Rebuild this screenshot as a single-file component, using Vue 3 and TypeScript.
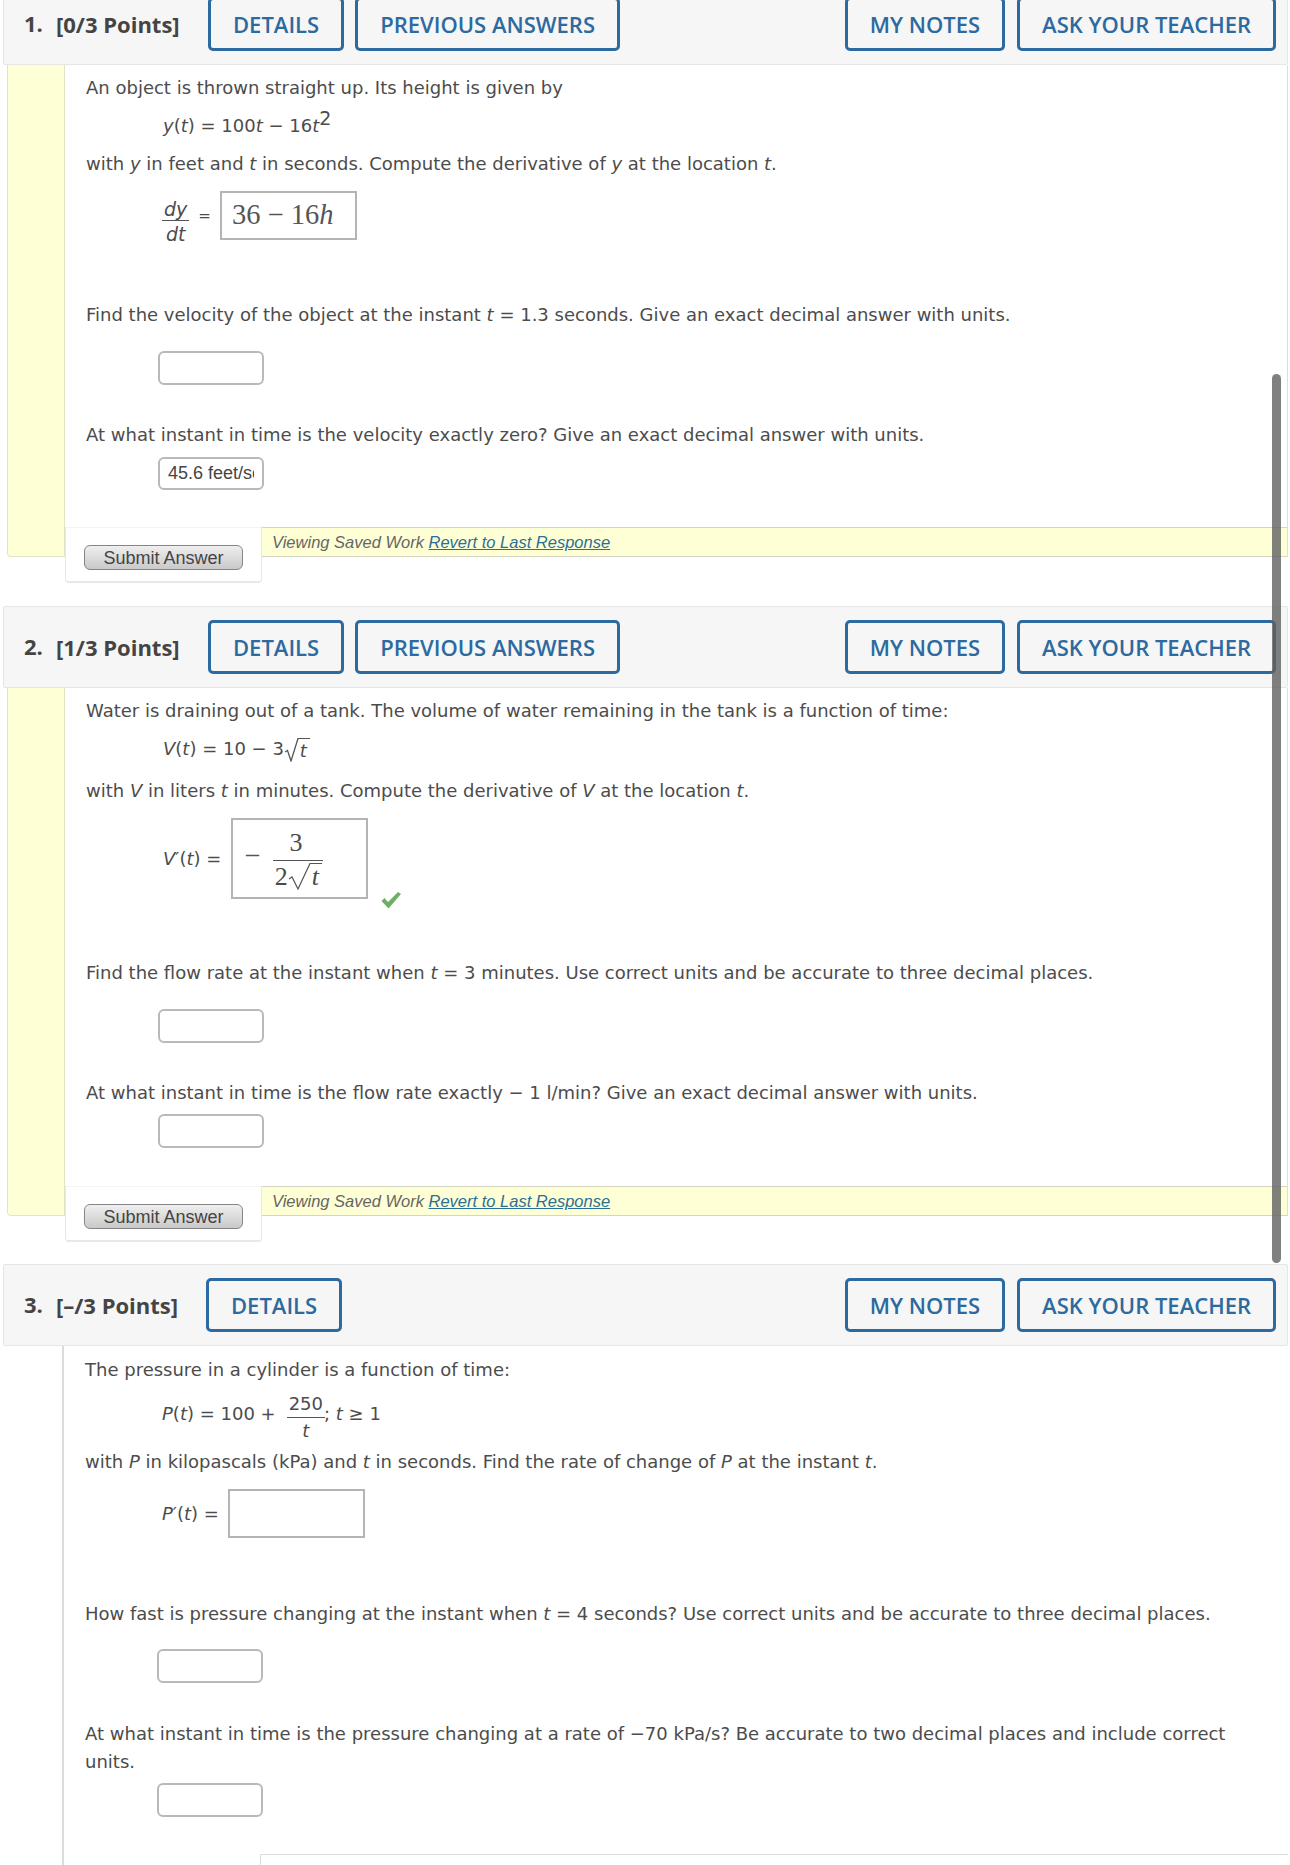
<script setup lang="ts">
const leftButtons = ['DETAILS', 'PREVIOUS ANSWERS']
const rightButtons = ['MY NOTES', 'ASK YOUR TEACHER']
</script>

<template>
  <div class="page">
    <div class="scrollbar"></div>

    <section class="question first">
      <header class="q-head">
        <span class="num">1.</span><span class="pts">[0/3 Points]</span>
        <button v-for="b in leftButtons" :key="b" class="tab">{{ b }}</button>
        <span class="spacer"></span>
        <button v-for="b in rightButtons" :key="b" class="tab">{{ b }}</button>
      </header>
      <div class="q-body">
        <div class="strip"></div>
        <div class="main">
          <div class="content">
            <p class="line">An object is thrown straight up. Its height is given by</p>
            <p class="line eq m10"><i>y</i>(<i>t</i>) = 100<i>t</i> &#8722; 16<i>t</i><sup>2</sup></p>
            <p class="line m10">with <i>y</i> in feet and <i>t</i> in seconds. Compute the derivative of <i>y</i> at the location <i>t</i>.</p>
            <div class="eq eq-row m13">
              <span class="frac small"><span class="top"><i>dy</i></span><span class="bot"><i>dt</i></span></span>
              <span class="eqs">=</span>
              <div class="mathbox short"><span class="tex">36 &#8722; 16<i>h</i></span></div>
            </div>
            <p class="line m61">Find the velocity of the object at the instant <i>t</i> = 1.3 seconds. Give an exact decimal answer with units.</p>
            <div class="answer m22"></div>
            <p class="line m36">At what instant in time is the velocity exactly zero? Give an exact decimal answer with units.</p>
            <div class="answer m8 filled"><span>45.6 feet/second</span></div>
          </div>
          <div class="foot m37">
            <div class="submit-panel"><button class="submit">Submit Answer</button></div>
            <div class="saved"><i>Viewing Saved Work <a>Revert to Last Response</a></i></div>
          </div>
        </div>
      </div>
    </section>

    <section class="question second">
      <header class="q-head">
        <span class="num">2.</span><span class="pts">[1/3 Points]</span>
        <button v-for="b in leftButtons" :key="b" class="tab">{{ b }}</button>
        <span class="spacer"></span>
        <button v-for="b in rightButtons" :key="b" class="tab">{{ b }}</button>
      </header>
      <div class="q-body">
        <div class="strip"></div>
        <div class="main">
          <div class="content">
            <p class="line">Water is draining out of a tank. The volume of water remaining in the tank is a function of time:</p>
            <p class="line eq m10"><i>V</i>(<i>t</i>) = 10 &#8722; 3<span class="root"><svg width="15" height="24" viewBox="0 0 15 24"><path d="M1 14 L3.5 12.5 L7 23 L14 .5 H15" fill="none" stroke="#555" stroke-width="1.3"/></svg><i>t</i></span></p>
            <p class="line m14">with <i>V</i> in liters <i>t</i> in minutes. Compute the derivative of <i>V</i> at the location <i>t</i>.</p>
            <div class="eq eq-row m13 tall">
              <span class="lhs"><i>V</i>&#8242;(<i>t</i>) =</span>
              <div class="mathbox tallbox">
                <span class="tex minus">&#8722;</span>
                <span class="frac tex-frac"><span class="top">3</span><span class="bot"><span class="tex-bot">2<span class="root tex-root"><svg width="23" height="27" viewBox="0 0 23 27"><path d="M1 16 L4 14 L10 26 L22 .5 H23" fill="none" stroke="#555" stroke-width="1.2"/></svg><i>t</i></span></span></span></span>
              </div>
              <svg class="check" width="22" height="18" viewBox="0 0 22 18"><path d="M1.5 10 L4.5 7 L8 11 L18 1 L21 3 L8.5 17.5 Z" fill="#6cb066"/></svg>
            </div>
            <p class="line m60">Find the flow rate at the instant when <i>t</i> = 3 minutes. Use correct units and be accurate to three decimal places.</p>
            <div class="answer m22"></div>
            <p class="line m36">At what instant in time is the flow rate exactly &#8722; 1 l/min? Give an exact decimal answer with units.</p>
            <div class="answer m7"></div>
          </div>
          <div class="foot m38">
            <div class="submit-panel"><button class="submit">Submit Answer</button></div>
            <div class="saved"><i>Viewing Saved Work <a>Revert to Last Response</a></i></div>
          </div>
        </div>
      </div>
    </section>

    <section class="question third">
      <header class="q-head">
        <span class="num">3.</span><span class="pts">[&#8211;/3 Points]</span>
        <button class="tab">DETAILS</button>
        <span class="spacer"></span>
        <button v-for="b in rightButtons" :key="b" class="tab">{{ b }}</button>
      </header>
      <div class="q-body plain">
        <div class="content">
          <p class="line">The pressure in a cylinder is a function of time:</p>
          <div class="eq eq-row m8 pfrac">
            <span class="ptext"><i>P</i>(<i>t</i>) = 100 +</span>
            <span class="frac"><span class="top">250</span><span class="bot"><i>t</i></span></span>
            <span class="ptext">; <i>t</i> &#8805; 1</span>
          </div>
          <p class="line m6">with <i>P</i> in kilopascals (kPa) and <i>t</i> in seconds. Find the rate of change of <i>P</i> at the instant <i>t</i>.</p>
          <div class="eq eq-row m13">
            <span class="lhs"><i>P</i>&#8242;(<i>t</i>) =</span>
            <div class="mathbox short"></div>
          </div>
          <p class="line m62">How fast is pressure changing at the instant when <i>t</i> = 4 seconds? Use correct units and be accurate to three decimal places.</p>
          <div class="answer m21"></div>
          <p class="line m37 wrap">At what instant in time is the pressure changing at a rate of &#8722;70 kPa/s? Be accurate to two decimal places and include correct units.</p>
          <div class="answer m7"></div>
          <div class="next-panel"></div>
        </div>
      </div>
    </section>
  </div>
</template>

<style scoped>
.page {
  position: relative;
  height: 1865px;
  overflow: hidden;
  background: #fff;
  color: #4c4c4c;
  font-family: "DejaVu Sans", Verdana, sans-serif;
  font-size: 18px;
}
.scrollbar {
  position: absolute;
  left: 1272px;
  top: 374px;
  width: 9px;
  height: 889px;
  border-radius: 5px;
  background: rgba(96, 96, 96, 0.8);
  z-index: 5;
}
.question { margin: 0 2px 49px 3px; }
.question.first { margin-top: -17px; }
.question.second { margin-bottom: 48px; }
.question.third { margin-bottom: 0; }

.q-head {
  display: flex;
  align-items: center;
  height: 82px;
  box-sizing: border-box;
  padding: 0 11px 0 0;
  background: #f6f6f6;
  border: 1px solid #e6e6e6;
  border-radius: 2px;
  font-family: "Open Sans", sans-serif;
}
.num {
  width: 32px;
  margin-left: 20px;
  margin-top: -3px;
  font-weight: 700;
  font-size: 22px;
  color: #444;
}
.pts {
  width: 152px;
  font-weight: 700;
  font-size: 22px;
  color: #444;
}
.third .pts { width: 150px; }
.tab {
  height: 54px;
  margin-right: 11px;
  padding: 0 22px;
  box-sizing: border-box;
  background: #f6f6f6;
  border: 3px solid #2c6a9f;
  border-radius: 5px;
  color: #2c6a9f;
  font-family: "Open Sans", sans-serif;
  font-weight: 600;
  font-size: 22px;
  white-space: nowrap;
}
.spacer + .tab { margin-right: 12px; }
.tab:last-child { margin-right: 0; }
.spacer { flex: 1; }

.q-body {
  display: flex;
  margin: 0 0 0 4px;
  border-right: 1px solid #ddd;
}
.strip {
  width: 58px;
  flex: none;
  background: #ffffd6;
  border: 1px solid #e3e3c8;
  border-width: 0 1px 1px 1px;
  border-radius: 0 0 0 4px;
  box-sizing: border-box;
}
.main { flex: 1; min-width: 0; }
.content { padding: 9px 0 0 21px; }

.line {
  margin: 0;
  line-height: 28px;
  white-space: nowrap;
}
.line.wrap { white-space: normal; padding-right: 50px; }
.line i, .eq i { font-style: italic; }
.eq { margin-left: 77px; }
.line sup { font-size: 19px; line-height: 0; vertical-align: 7px; }

.m6 { margin-top: 6px; }
.m7 { margin-top: 7px; }
.m8 { margin-top: 8px; }
.m10 { margin-top: 10px; }
.m13 { margin-top: 13px; }
.m14 { margin-top: 14px; }
.m21 { margin-top: 21px; }
.m22 { margin-top: 22px; }
.m36 { margin-top: 36px; }
.m37 { margin-top: 37px; }
.m38 { margin-top: 38px; }
.m60 { margin-top: 60px; }
.m61 { margin-top: 61px; }
.m62 { margin-top: 62px; }

.eq-row { display: flex; align-items: center; }
.frac {
  display: inline-flex;
  flex-direction: column;
  align-items: center;
  line-height: 22px;
}
.frac .top { border-bottom: 1px solid #555; padding: 0 1px; width: 100%; text-align: center; }
.frac .bot { line-height: 26px; }
.frac.small { margin: 7px 10px -7px 0; font-size: 19px; }
.eqs { margin-right: 9px; font-size: 15px; }
.lhs { margin-right: 10px; }
.plain .lhs { margin-right: 9px; }

.mathbox {
  box-sizing: border-box;
  background: #fff;
  border: 2px solid #b4b4b4;
  display: flex;
  align-items: center;
}
.mathbox.short { width: 137px; height: 49px; padding: 0 0 2px 10px; }
.tallbox { width: 137px; height: 81px; padding-left: 11px; }
.tex {
  font-family: "Liberation Serif", serif;
  font-size: 28.5px;
  color: #555;
  white-space: nowrap;
}
.tex.minus { margin-right: 13px; margin-top: -6px; }
.tex-frac {
  font-family: "Liberation Serif", serif;
  font-size: 26px;
  line-height: 34px;
  width: 50px;
  margin-top: -1px;
}
.tex-frac .top { padding-right: 6px; box-sizing: border-box; }
.tex-frac .bot { line-height: 28px; padding-top: 2px; }
.tex-bot { display: inline-flex; align-items: flex-start; }

.root { display: inline-flex; align-items: flex-start; vertical-align: -7px; }
.root i {
  display: inline-block;
  border-top: 1px solid #555;
  padding: 0 3px 0 1px;
  line-height: 23px;
}
.tex-root i { line-height: 26px; }
.check { align-self: flex-end; margin: 0 0 -10px 12px; }

.answer {
  box-sizing: border-box;
  margin-left: 72px;
  width: 106px;
  height: 34px;
  background: #fff;
  border: 2px solid #b9b9b9;
  border-radius: 6px;
}
.answer.filled {
  display: flex;
  align-items: center;
  overflow: hidden;
  padding: 0 8px;
  font-family: "Liberation Sans", sans-serif;
  font-size: 18px;
  color: #444;
  white-space: nowrap;
  height: 33px;
}
.answer.filled span { display: block; overflow: hidden; }

.foot { display: flex; }
.submit-panel {
  flex: none;
  box-sizing: border-box;
  width: 197px;
  height: 56px;
  margin-bottom: -26px;
  padding: 17px 0 0 18px;
  background: #fff;
  border: 1px solid #e8e8e8;
  border-top-color: #f3f3f3;
  border-bottom-width: 2px;
  border-radius: 0 0 4px 4px;
  position: relative;
}
.submit {
  display: block;
  box-sizing: border-box;
  width: 159px;
  height: 25px;
  padding: 0;
  background: linear-gradient(#efefef, #c9c9c9);
  border: 1px solid #858585;
  border-radius: 6px;
  color: #444;
  font-family: "Liberation Sans", sans-serif;
  font-size: 18px;
  line-height: 22px;
}
.saved {
  flex: 1;
  box-sizing: border-box;
  height: 30px;
  padding: 5px 0 0 10px;
  background: #ffffd6;
  border: 1px solid #d4d4c0;
  border-width: 1px 0 1px 0;
  font-family: "Liberation Sans", sans-serif;
  font-size: 16.5px;
  color: #666;
}
.saved a { color: #2a6f96; text-decoration: underline; }

.q-body.plain {
  display: block;
  margin-left: 0;
  padding-left: 59px;
  border-right: 0;
}
.plain .content {
  padding: 10px 0 0 21px;
  border-left: 2px solid #dcdcdc;
}
.pfrac { height: 50px; }
.ptext { margin-bottom: 8px; white-space: pre; }
.pfrac .frac { margin: 0 0 0 12px; }
.pfrac .top { line-height: 26px; }
.pfrac .bot { line-height: 26px; }
.next-panel {
  height: 20px;
  margin: 37px 0 0 175px;
  border: 1px solid #ddd;
  border-right: 0;
  border-bottom: 0;
}
</style>

<style>
html, body { margin: 0; padding: 0; background: #fff; }
</style>
